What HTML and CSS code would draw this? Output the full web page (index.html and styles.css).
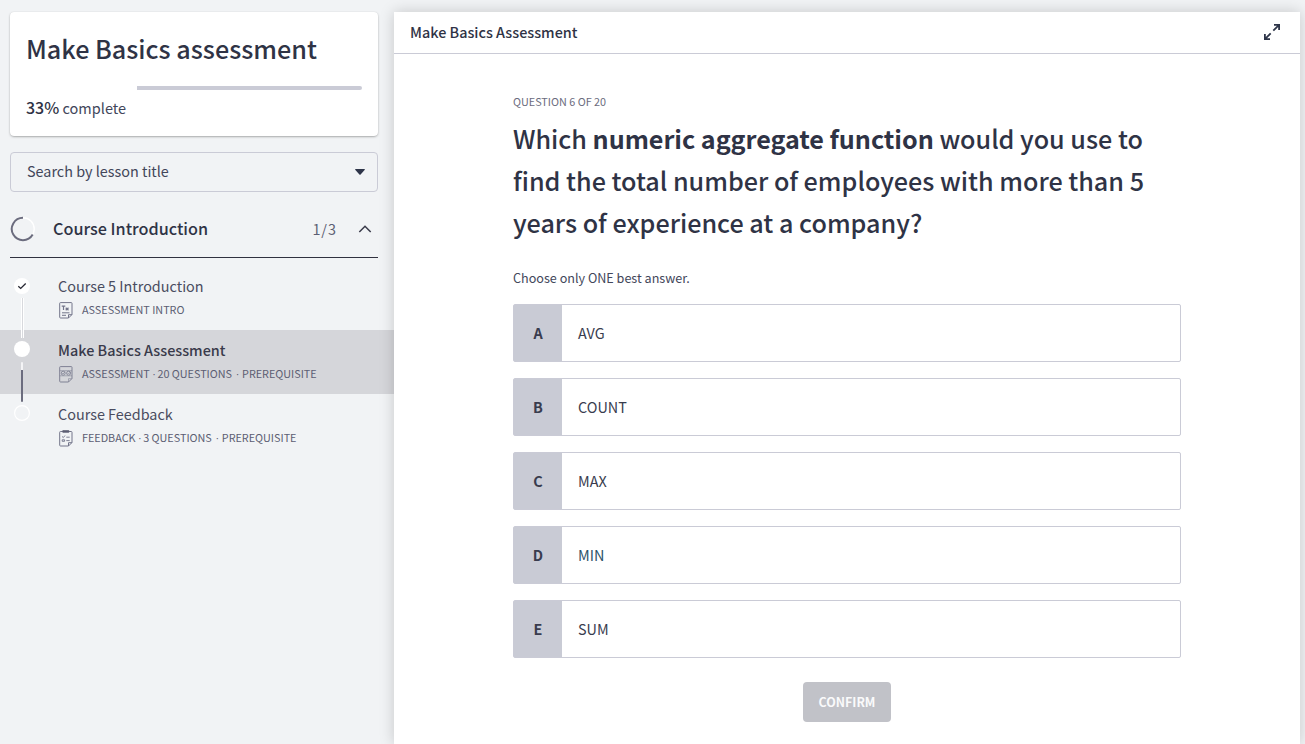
FILE: index.html
```html
<!DOCTYPE html>
<html lang="en">
<head>
<meta charset="utf-8">
<title>Make Basics Assessment</title>
<link rel="stylesheet" href="styles.css">
</head>
<body>
<div class="app">
  <aside class="sidebar">
    <section class="course-card">
      <h1 class="course-title">Make Basics assessment</h1>
      <div class="progress"><div class="progress-rest"></div></div>
      <p class="complete"><strong>33%</strong> complete</p>
    </section>
    <div class="search"><span class="placeholder">Search by lesson title</span>
      <svg class="caret" width="10" height="6" viewBox="0 0 10 6"><path d="M0.3 0H9.7Q10 .5 9.6 .9L5.6 5.4Q5 6 4.4 5.4L.4 .9Q0 .5 .3 0Z" fill="#2e3549"/></svg>
    </div>
    <header class="section-head">
      <svg class="ring" width="26" height="26" viewBox="0 0 26 26" fill="none" stroke-width="2"><circle cx="13" cy="13" r="11.2" stroke="#fff" stroke-width="1.4"/><path d="M13 1.8A11.2 11.2 0 1 0 22.7 18.6" stroke="#6b6c7e"/></svg>
      <h2 class="section-title">Course Introduction</h2>
      <span class="section-count">1/3</span>
      <svg class="chevron" width="14" height="8" viewBox="0 0 14 8" fill="none" stroke="#393a4a" stroke-width="1.5"><path d="M1.3 7L7 1.2L12.7 7"/></svg>
    </header>
    <ol class="lessons">
      <li class="lesson">
        <div class="rail"><svg width="16" height="16" viewBox="0 0 16 16"><circle cx="8" cy="8" r="8" fill="#fff"/><path d="M4.3 8.2L6.7 10.4L11.7 5.5" fill="none" stroke="#272833" stroke-width="1.3"/></svg><i class="line line-done"></i></div>
        <div class="lesson-body">
          <div class="lesson-title">Course 5 Introduction</div>
          <div class="lesson-meta">
            <svg class="icon" width="14" height="17" viewBox="0 0 14 17" fill="none" stroke="#73758a"><path d="M9.5 16H1.5Q.7 16 .7 15.2V1.3Q.7 .6 1.5 .6H12.2Q13 .6 13 1.3V12.5L9.5 16Z"/><path d="M9.5 16V12.7H13M3 10.8H10.5M3 13.3H7"/><path d="M2.7 4.2H6.3M4.5 4.2V8M6.7 5.7L9.5 8.2M9.5 5.7L6.7 8.2" stroke-width="1.2"/></svg>
            <span>ASSESSMENT INTRO</span>
          </div>
        </div>
      </li>
      <li class="lesson lesson-active">
        <div class="rail"><svg width="16" height="16" viewBox="0 0 16 16"><circle cx="8" cy="8" r="8" fill="#fff"/></svg><i class="line line-next"></i></div>
        <div class="lesson-body">
          <div class="lesson-title">Make Basics Assessment</div>
          <div class="lesson-meta">
            <svg class="icon" width="14" height="17" viewBox="0 0 14 17" fill="none" stroke="#7f8193"><path d="M9.5 16H1.5Q.7 16 .7 15.2V1.3Q.7 .6 1.5 .6H12.2Q13 .6 13 1.3V12.5L9.5 16Z"/><path d="M9.5 16V12.7H13M.7 4.7H13M.7 9.8H13" stroke-width=".6"/><circle cx="4.2" cy="7.2" r="2" stroke-width=".9"/><circle cx="9.6" cy="7.2" r="2" stroke-width=".9"/><path d="M3.2 7.2L4 8L6 5.8M8.7 7.2L9.5 8L11.5 5.8" stroke-width=".7"/></svg>
            <span>ASSESSMENT <i class="dot">·</i> 20 QUESTIONS <i class="dot dot-wide">·</i> PREREQUISITE</span>
          </div>
        </div>
      </li>
      <li class="lesson">
        <div class="rail"><svg width="16" height="16" viewBox="0 0 16 16"><circle cx="8" cy="8" r="7.4" fill="none" stroke="#fff" stroke-width="1.2"/></svg></div>
        <div class="lesson-body">
          <div class="lesson-title">Course Feedback</div>
          <div class="lesson-meta">
            <svg class="icon" width="14" height="17" viewBox="0 0 14 17" fill="none" stroke="#73758a"><path d="M9.5 16H1.5Q.7 16 .7 15.2V2.3Q.7 1.5 1.5 1.5H12.2Q13 1.5 13 2.3V12.5L9.5 16Z"/><path d="M9.5 16V12.7H13"/><path d="M3.8 .4H9.8V2.4H3.8Z" fill="#5c5e73" stroke="#5c5e73" stroke-width=".6"/><path d="M3 6.4L4.3 7.6L6 5.5M7.3 7.2H10.7M3.2 9.8H5.6V11.3H3.2ZM7.3 10.6H10.7" stroke-width=".9"/></svg>
            <span>FEEDBACK <i class="dot">·</i> 3 QUESTIONS <i class="dot dot-wide">·</i> PREREQUISITE</span>
          </div>
        </div>
      </li>
    </ol>
  </aside>
  <main class="panel">
    <header class="panel-head">
      <span class="panel-title">Make Basics Assessment</span>
      <svg class="expand" width="16" height="16" viewBox="0 0 16 16" fill="none" stroke="#2e3549" stroke-width="1.8"><path d="M10 .9H15.1V6M15.1 .9L9.3 6.7M6 15.1H.9V10M.9 15.1L6.7 9.3"/></svg>
    </header>
    <div class="question">
      <p class="question-count">QUESTION 6 OF 20</p>
      <h2 class="question-text">Which <b>numeric aggregate function</b> would you use to<br>find the total number of employees with more than 5<br>years of experience at a company?</h2>
      <p class="hint">Choose only ONE best answer.</p>
      <div class="answers">
        <div class="answer"><span class="key">A</span><span class="value">AVG</span></div>
        <div class="answer"><span class="key">B</span><span class="value">COUNT</span></div>
        <div class="answer"><span class="key">C</span><span class="value">MAX</span></div>
        <div class="answer"><span class="key">D</span><span class="value value-accent">MIN</span></div>
        <div class="answer"><span class="key">E</span><span class="value">SUM</span></div>
      </div>
      <button class="confirm">CONFIRM</button>
    </div>
  </main>
</div>
</body>
</html>
```
FILE: styles.css
```css
* { box-sizing: border-box; }
body, h1, h2, p, ol { margin: 0; padding: 0; }
body {
  height: 744px;
  overflow: hidden;
  background: #f1f3f5;
  color: #2f3345;
  font: 14.4px/24px "Noto Sans CJK SC", "Noto Sans", sans-serif;
}
svg { display: block; flex: none; }
.app { display: flex; height: 744px; padding: 12px 5px 0 0; }
.sidebar { width: 394px; flex: none; }
.course-card {
  width: 368px;
  height: 124px;
  margin-left: 10px;
  padding: 15px 16px 0;
  border-radius: 4px;
  background: #fff;
  box-shadow: 0 1px 3px -1px rgba(0, 0, 0, .6), 0 0 1px rgba(0, 0, 0, .12);
}
.course-title { height: 42px; font-size: 25.15px; font-weight: 500; line-height: 42px; white-space: nowrap; }
.progress { height: 4px; margin-top: 17px; padding-left: 111px; }
.progress-rest { height: 4px; border-radius: 0 2px 2px 0; background: #cacbd6; }
.complete { margin-top: 5px; font-size: 14.5px; color: #42465a; }
.complete strong { color: #2f3345; font-size: 16px; font-weight: 500; }
.search {
  display: flex;
  align-items: center;
  justify-content: space-between;
  width: 368px;
  height: 40px;
  margin: 16px 0 0 10px;
  padding: 0 12px 0 16px;
  border: 1px solid #cacbd6;
  border-radius: 4px;
}
.placeholder { height: 26px; color: #42465a; }
.section-head {
  display: flex;
  align-items: center;
  width: 368px;
  height: 66px;
  margin-left: 10px;
  padding: 9px 6px 0 0;
  border-bottom: 1px solid #30313f;
}
.section-title { flex: 1; height: 26px; margin-left: 17px; font-size: 16.2px; font-weight: 500; }
.section-count { margin-right: 21px; color: #5c5e73; letter-spacing: 1px; }
.lessons { list-style: none; margin-top: 8px; }
.lesson { display: flex; height: 64px; padding: 8px 0 0 14px; }
.lesson-active { background: #d5d6da; }
.lesson:first-child .rail { padding-top: 4px; }
.rail { width: 16px; padding-top: 3px; display: flex; flex-direction: column; align-items: center; flex: none; }
.line { width: 3px; flex: none; position: relative; z-index: 1; }
.line-done { height: 40px; margin-top: 4px; border: solid #fff; border-width: 0 1px; background: #d8d9dd; }
.line-next { height: 40px; margin-top: 5px; border-radius: 2px; width: 2px; background: linear-gradient(#f4f4f6 8px, #6b6c7e 8px); }
.lesson-body { margin-left: 28px; }
.lesson-title { height: 24px; color: #4a4c60; white-space: nowrap; }
.lesson-active .lesson-title { color: #393a4a; font-weight: 500; }
.lesson-meta { display: flex; align-items: center; height: 23px; gap: 9px; padding-left: 1px; color: #5c5e73; font-size: 10.8px; line-height: 18px; white-space: nowrap; }
.lesson-meta span { height: 20px; }
.lesson-meta svg { position: relative; top: .5px; }
.dot { display: inline-block; width: 2.8px; font-family: "Liberation Sans", sans-serif; font-style: normal; }
.dot-wide { margin: 0 1.2px; }
.panel { flex: 1; height: 732px; background: #fff; box-shadow: 0 0 14px rgba(0, 0, 0, .18); }
.panel-head {
  display: flex;
  align-items: center;
  justify-content: space-between;
  height: 42px;
  padding: 0 20px 0 16px;
  border-bottom: 1px solid #cacbd6;
}
.panel-title { height: 26px; font-weight: 500; }
.expand { position: relative; top: -.5px; }
.question { width: 668px; margin: 38px auto 0; }
.question-count { height: 18px; color: #6b6c7e; font-size: 10.8px; line-height: 18px; }
.question-text { margin-top: 7px; font-size: 25.15px; font-weight: 500; line-height: 42px; white-space: nowrap; }
.question-text b { font-weight: 700; letter-spacing: -.04px; }
.hint { margin-top: 24px; color: #42465a; font-size: 12.6px; line-height: 21px; }
.answers { display: grid; gap: 16px; margin-top: 16px; }
.answer { display: flex; height: 58px; border: 1px solid #cacbd6; border-radius: 2px; }
.key { width: 48px; background: #c9cbd5; color: #393c4e; font-weight: 600; text-align: center; line-height: 56px; }
.value { padding-left: 16px; color: #393c4e; line-height: 56px; }
.value-accent { color: #2c5268; }
.confirm {
  display: block;
  width: 88px;
  height: 40px;
  margin: 24px auto 0;
  padding: 0;
  border: 0;
  border-radius: 4px;
  background: #c1c2c8;
  color: #fafafb;
  font: bold 12.4px/40px "Noto Sans CJK SC", sans-serif;
}
```
